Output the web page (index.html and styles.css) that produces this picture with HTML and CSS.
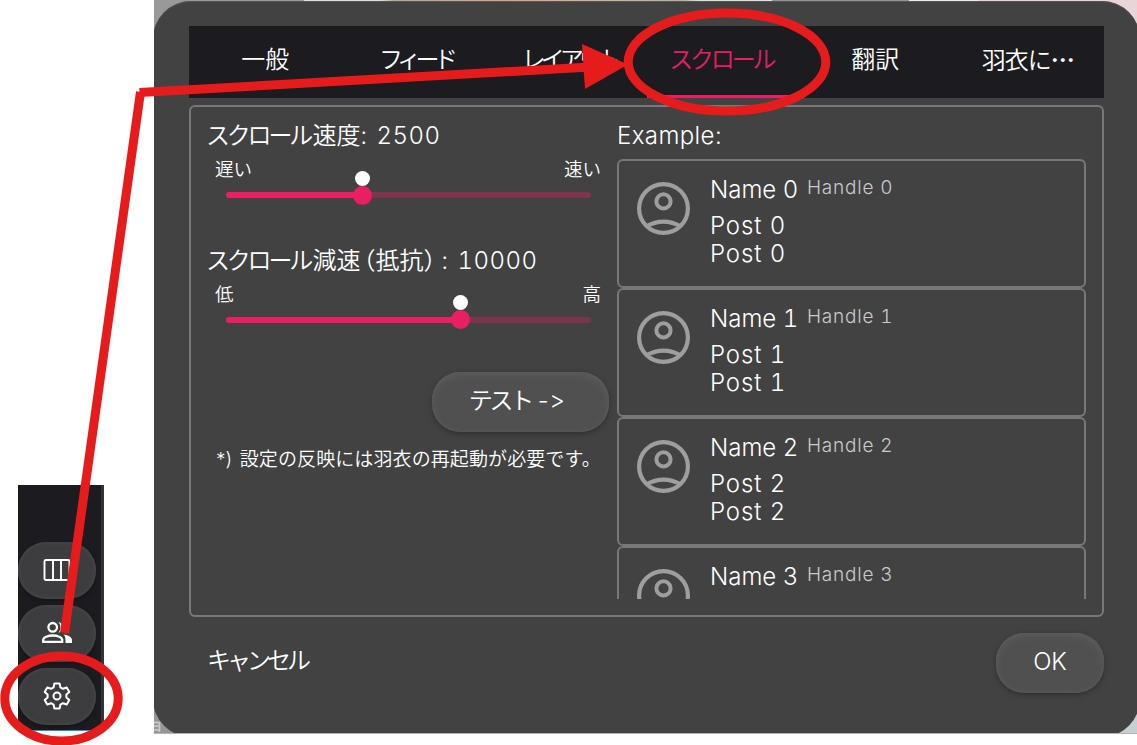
FILE: index.html
```html
<!DOCTYPE html>
<html lang="ja">
<head>
<meta charset="utf-8">
<title>スクロール設定</title>
<link rel="stylesheet" href="styles.css">
</head>
<body>
<svg class="defs" width="0" height="0">
  <symbol id="account" viewBox="0 0 53 53">
    <g fill="none" stroke="#9e9e9e">
      <circle cx="26.5" cy="26.5" r="24.4" stroke-width="4.2"/>
      <circle cx="26.5" cy="19.4" r="7.1" stroke-width="4"/>
      <path d="M9 44.500Q26.500 34.600 44 44.500" stroke-width="4.200"/>
    </g>
  </symbol>
</svg>
<main class="page">
  <aside class="rail">
    <button class="rail-btn"><svg width="28" height="24" viewBox="0 0 28 24" fill="none" stroke="#fff" stroke-width="1.900"><rect x="1.500" y="2" width="25" height="20" rx="1.500"/><path d="M10 2v20M18 2v20"/></svg></button>
    <button class="rail-btn"><svg width="32" height="24" viewBox="0 0 32 24"><g fill="none" stroke="#fff" stroke-width="2.300"><circle cx="11.700" cy="6.300" r="4.300"/><path d="M2.200 20.900v-2.100c0-2.500 4.800-4.300 9.500-4.300s9.500 1.800 9.500 4.300v2.100z"/></g><path fill="#fff" d="M17.500 1a5.500 5.500 0 0 1 0 10.700c2.500-3 2.500-7.500 0-10.700zM22.500 13.500c5 .7 8.500 2.600 8.500 5.400V22h-6.500v-3.200c0-2.200-.7-3.900-2-5.300z"/></g></svg></button>
    <button class="rail-btn"><svg width="30" height="30" viewBox="0 0 30 30" fill="none" stroke="#fff" stroke-width="2" stroke-linejoin="round"><path d="M12.400 2.500h5.200l.8 3.800 2.600 1.500 3.700-1.300 2.600 4.500-2.900 2.600v2.800l2.900 2.600-2.600 4.500-3.700-1.300-2.600 1.500-.8 3.800h-5.200l-.8-3.800L9 22.200l-3.700 1.300L2.700 19l2.900-2.600v-2.800L2.700 11l2.600-4.500L9 7.800l2.600-1.500z"/><circle cx="15" cy="15" r="3.500"/></svg></button>
  </aside>
  <section class="backdrop">
    <svg class="behind" width="8" height="12" viewBox="0 0 8 12" fill="none" stroke="#ccc" stroke-width="1.500"><path d="M0 1.500h5.500V11M0 5h5.500M0 9h5.500"/></svg>
    <div class="dialog">
      <nav class="tabs">
        <a class="tab">一般</a>
        <a class="tab"><span class="k4">フィード</span></a>
        <a class="tab"><span class="k5">レイアウト</span></a>
        <a class="tab active"><span class="kana">スクロール</span></a>
        <a class="tab">翻訳</a>
        <a class="tab"><span class="about">羽衣に<span class="dots">…</span></span></a>
      </nav>
      <div class="panel">
        <div class="settings">
          <div class="setting">
            <h2><span class="kana">スクロール</span>速度<span class="num">: 2500</span></h2>
            <div class="ends"><span>遅い</span><span>速い</span></div>
            <div class="slider"><i class="fill" style="width:136.500px"></i><i class="thumb"></i></div>
          </div>
          <div class="setting">
            <h2><span class="kana">スクロール</span>減速<span class="paren">（抵抗）</span><span class="num">: 10000</span></h2>
            <div class="ends"><span>低</span><span>高</span></div>
            <div class="slider"><i class="fill" style="width:234.500px"></i><i class="thumb"></i></div>
          </div>
          <button class="btn test"><span class="kana">テスト</span> <span class="arrow">-&gt;</span></button>
          <p class="note">*) 設定の反映には羽衣の再起動が必要です。</p>
        </div>
        <div class="example">
          <h2 class="latin">Example:</h2>
          <div class="feed">
            <article class="card"><svg class="avatar"><use href="#account"/></svg><div class="post"><div class="who"><b>Name 0</b><small>Handle 0</small></div><p>Post 0<br>Post 0</p></div></article>
            <article class="card"><svg class="avatar"><use href="#account"/></svg><div class="post"><div class="who"><b>Name 1</b><small>Handle 1</small></div><p>Post 1<br>Post 1</p></div></article>
            <article class="card"><svg class="avatar"><use href="#account"/></svg><div class="post"><div class="who"><b>Name 2</b><small>Handle 2</small></div><p>Post 2<br>Post 2</p></div></article>
            <article class="card"><svg class="avatar"><use href="#account"/></svg><div class="post"><div class="who"><b>Name 3</b><small>Handle 3</small></div></div></article>
          </div>
        </div>
      </div>
      <footer class="actions">
        <a class="cancel">キャンセル</a>
        <button class="btn ok">OK</button>
      </footer>
    </div>
  </section>
  <svg class="notes" width="1137" height="745" viewBox="0 0 1137 745" fill="none" stroke="#e61c1c" stroke-width="9">
    <path d="M64.500 633L140.500 92"/>
    <path d="M139.500 92.500L590 67"/>
    <path d="M582 44L585 89L628 64.500Z" fill="#e61c1c" stroke="none"/>
    <ellipse cx="727" cy="62" rx="98.800" ry="49"/>
    <ellipse cx="61.500" cy="698.500" rx="56.700" ry="42.500"/>
  </svg>
</main>
</body>
</html>
```
FILE: styles.css
```css
* { box-sizing: border-box; }
body { margin: 0; background: #fff; }
h2, p { margin: 0; font-weight: 350; font-size: 24px; }
button { border: 0; padding: 0; font: inherit; color: inherit; }
.defs { position: absolute; }
.page {
  position: relative;
  display: flex;
  width: 1137px;
  height: 745px;
  overflow: hidden;
  font: 350 24px/29px Inter, "Noto Sans CJK JP", sans-serif;
  font-variant-ligatures: none;
  color: #fff;
}
.rail {
  display: flex;
  flex-direction: column;
  justify-content: flex-end;
  gap: 6px;
  width: 86px;
  height: 246px;
  margin: 485px 50px 0 18px;
  padding-bottom: 5px;
  background: #1c1b20;
  border-right: 3px solid #343438;
  border-bottom: 1px solid #2196f3;
}
.rail-btn {
  display: flex;
  align-items: center;
  justify-content: center;
  width: 78px;
  height: 57px;
  border-radius: 28px;
  background: #3d3d3f;
  box-shadow: inset 0 0 5px #4b4b4c, 0 2px 4px #151518;
  clip-path: inset(0 0 -6px 0);
}
.rail-btn svg { margin-top: -1px; }
.backdrop {
  position: relative;
  width: 983px;
  height: 734px;
  overflow: hidden;
  border-bottom: 1px solid #b4b4b4;
  background:
    linear-gradient(90deg, #999 0 150px, #dce3da 150px 226px, #b7a798 240px, #d6a583 330px, #d8b394 440px, #b5b3a0 530px, #e1e1de 546px 618px, #929494 618px 755px, #ededeb 755px 824px, #e8d5d8 825px) top / 100% 60px no-repeat,
    linear-gradient(90deg, #969696 50%, #c5d0d5 50%);
}
.behind { position: absolute; left: 0; top: 721px; }
.dialog {
  position: relative;
  width: 987px;
  height: 736px;
  margin: 1px 0 0 -1px;
  padding: 25px 36px 0;
  border-radius: 38px;
  background: #424242;
  box-shadow: inset 0 1px 0 #555;
}
.tabs { display: grid; grid-template-columns: repeat(6, 1fr); height: 72px; background: #1c1b20; }
.tab { display: flex; align-items: center; justify-content: center; padding-bottom: 3px; border-bottom: 3px solid transparent; }
.active { color: #e91e63; border-color: #e91e63; }
.kana { letter-spacing: -3.200px; }
.tab .kana { margin-left: -3px; }
.k4 { letter-spacing: -5.500px; margin-left: -4px; }
.k5 { letter-spacing: -5px; margin-left: -2px; }
.dots { font-family: "Noto Sans CJK JP", sans-serif; font-weight: 700; }
.about { letter-spacing: -1px; }
.panel {
  display: flex;
  height: 512px;
  margin-top: 7px;
  padding: 14px 16px 0 17px;
  border: 2px solid #787878;
  border-radius: 6px;
}
.settings { width: 401px; }
.setting { height: 124.500px; }
.settings h2 { height: 29px; white-space: nowrap; line-height: 29px; text-indent: -2px; }
.settings h2 .kana { margin-right: 2.500px; }
.num { letter-spacing: .5px; word-spacing: 2px; font-feature-settings: "tnum"; }
.paren { font-feature-settings: "halt"; margin: 0 6px 0 3px; }
.ends { display: flex; justify-content: space-between; padding: 5px 8px 0 7px; height: 34px; font-size: 18.500px; line-height: 28px; }
.slider { display: flex; align-items: center; width: 365px; height: 6px; margin: 8px 0 0 17.500px; border-radius: 3px; background: #7c354c; }
.fill { height: 6px; border-radius: 3px; background: #e91e63; }
.thumb { position: relative; flex: none; width: 19px; height: 19px; margin-left: -9.500px; border-radius: 50%; background: #e91e63; }
.thumb::before { content: ""; position: absolute; left: 2px; top: -15px; width: 15px; height: 15px; border-radius: 50%; background: #fff; }
.btn { height: 60px; border-radius: 28px; background: #505050; box-shadow: inset 0 3px 8px #5d5d5d, inset 0 0 3px #5b5b5b, 0 2px 5px #303030; }
.test { display: block; width: 177px; margin: 2px 0 0 224px; padding: 0 7px 4px 0; }
.arrow { letter-spacing: .5px; }
.note { padding: 13px 0 0 8px; font-size: 19px; white-space: nowrap; word-spacing: 2px; letter-spacing: .1px; }
.example { width: 469px; margin-left: 8px; }
.example h2 { line-height: 29px; margin-bottom: 9px; }
.latin { letter-spacing: .4px; }
.feed { height: 440px; overflow: hidden; }
.card { display: flex; height: 129px; padding: 20px 18px 0; border: 2px solid #787878; border-radius: 6px; }
.avatar { width: 53px; height: 53px; margin-top: 1px; }
.post { margin-left: 20px; font-feature-settings: "tnum"; }
.who { display: flex; height: 36px; margin-top: -6px; line-height: 29px; }
.who b { width: 97px; font-weight: 350; line-height: 29px; }
.who small { font-size: 19px; line-height: 24px; color: #cacaca; padding-top: 1px; letter-spacing: .8px; }
.post p { line-height: 28.500px; letter-spacing: .9px; padding-top: .5px; }
.actions { display: flex; justify-content: space-between; align-items: flex-start; padding: 16px 0 0 18px; }
.cancel { padding-top: 13px; letter-spacing: -4px; }
.ok { width: 108px; padding-bottom: 4px; }
.notes { position: absolute; left: 0; top: 0; }
```
